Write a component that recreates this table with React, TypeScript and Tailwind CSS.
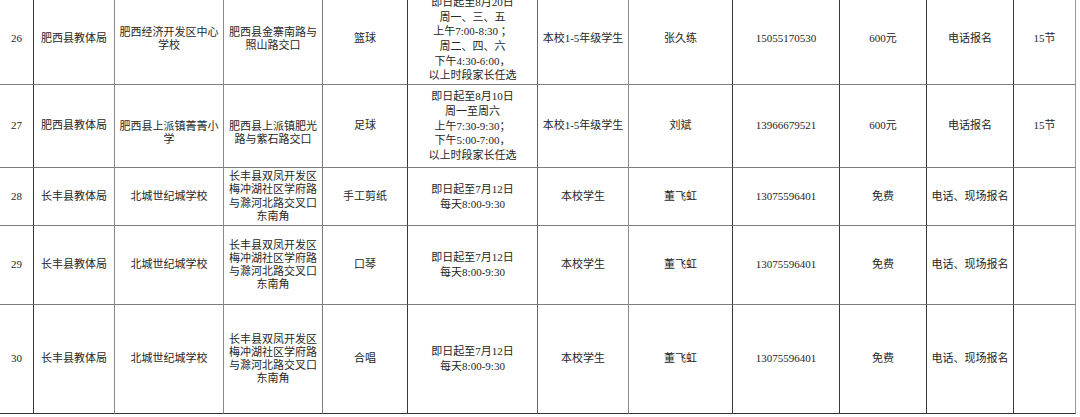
import React from "react";

// 表格：暑期托管/兴趣班报名信息（第26–30项）

type Cell = string | string[];

interface Row {
  h: string;
  cells: Cell[];
  lift?: boolean; // 第二、三列文字略偏下
}

const ADDR_CF = ["长丰县双凤开发区", "梅冲湖社区学府路", "与滁河北路交叉口", "东南角"];
const TIME_CF = ["即日起至7月12日", "每天8:00-9:30"];

const ROWS: Row[] = [
  {
    h: "h-[91px]",
    cells: [
      "26",
      "肥西县教体局",
      ["肥西经济开发区中心", "学校"],
      ["肥西县金寨南路与", "照山路交口"],
      "篮球",
      ["即日起至8月20日", "周一、三、五", "上午7:00-8:30 ；", "周二、四、六", "下午4:30-6:00，", "以上时段家长任选"],
      "本校1-5年级学生",
      "张久练",
      "15055170530",
      "600元",
      "电话报名",
      "15节",
    ],
  },
  {
    h: "h-[83px]",
    lift: true,
    cells: [
      "27",
      "肥西县教体局",
      ["肥西县上派镇菁菁小", "学"],
      ["肥西县上派镇肥光", "路与紫石路交口"],
      "足球",
      ["即日起至8月10日", "周一至周六", "上午7:30-9:30；", "下午5:00-7:00，", "以上时段家长任选"],
      "本校1-5年级学生",
      "刘斌",
      "13966679521",
      "600元",
      "电话报名",
      "15节",
    ],
  },
  {
    h: "h-[58px]",
    cells: ["28", "长丰县教体局", "北城世纪城学校", ADDR_CF, "手工剪纸", TIME_CF, "本校学生", "董飞虹", "13075596401", "免费", "电话、现场报名", ""],
  },
  {
    h: "h-[79px]",
    cells: ["29", "长丰县教体局", "北城世纪城学校", ADDR_CF, "口琴", TIME_CF, "本校学生", "董飞虹", "13075596401", "免费", "电话、现场报名", ""],
  },
  {
    h: "h-[109px]",
    cells: ["30", "长丰县教体局", "北城世纪城学校", ADDR_CF, "合唱", TIME_CF, "本校学生", "董飞虹", "13075596401", "免费", "电话、现场报名", ""],
  },
];

// right-border colour per column (some rules print darker than others)
const COL_BORDER = [
  "border-r-[#3a3a3a]",
  "border-r-[#8a8a8a]",
  "border-r-[#8a8a8a]",
  "border-r-[#7a7a7a]",
  "border-r-[#3a3a3a]",
  "border-r-[#666]",
  "border-r-[#8a8a8a]",
  "border-r-[#3a3a3a]",
  "border-r-[#3a3a3a]",
  "border-r-[#3a3a3a]",
  "border-r-[#3a3a3a]",
  "border-r-[#999]",
];

const leadingFor = (col: number) =>
  col === 5 ? "leading-[14.7px]" : col === 3 ? "leading-[13.2px]" : "leading-[13.5px]";

export default function App() {
  return (
    <div
      className="w-[1080px] h-[417px] overflow-hidden bg-white text-[#262626] text-[11px]"
      style={{ fontFamily: "'Liberation Serif', 'Noto Sans CJK SC', serif" }}
    >
      <div className="-mt-[6px] flex flex-col">
        {ROWS.map((row, ri) => (
          <div
            key={ri}
            className={`grid grid-cols-[34px_81px_109px_99px_85px_130px_91px_104px_107px_87px_87px_62px] ${row.h}`}
          >
            {row.cells.map((cell, ci) => {
              const lines = Array.isArray(cell) ? cell : [cell];
              const last = ri === ROWS.length - 1;
              return (
                <div
                  key={ci}
                  className={`flex items-center justify-center text-center border-r border-b ${COL_BORDER[ci]} ${
                    last ? "border-b-[#333]" : "border-b-[#7d7d7d]"
                  }`}
                >
                  <div className={`${leadingFor(ci)} ${row.lift && (ci === 2 || ci === 3) ? "mt-[14px]" : ""}`}>
                    {lines.map((l, li) => (
                      <div key={li} className="whitespace-nowrap">
                        {l}
                      </div>
                    ))}
                  </div>
                </div>
              );
            })}
          </div>
        ))}
      </div>
    </div>
  );
}
